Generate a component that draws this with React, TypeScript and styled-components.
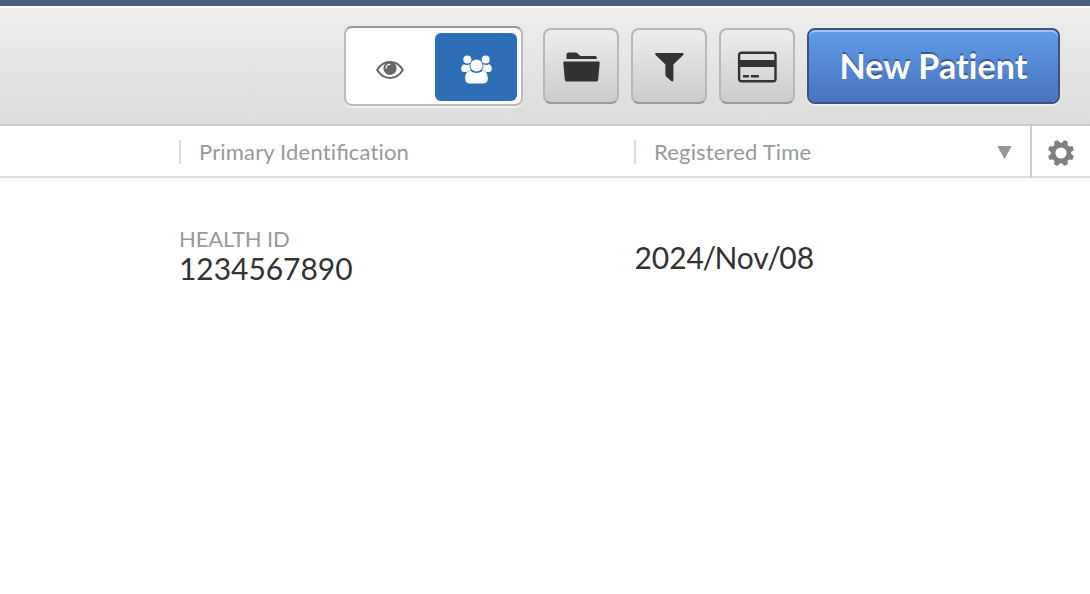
import React from "react";
import styled, { createGlobalStyle, css } from "styled-components";

const GlobalStyle = createGlobalStyle`
  * { box-sizing: border-box; }
  html, body { margin: 0; padding: 0; background: #fff; }
  body { font-family: Lato, "Open Sans", sans-serif; color: #333; overflow: hidden; font-variant-ligatures: none; }
  button { font: inherit; margin: 0; padding: 0; }
  svg { display: block; flex: none; }
`;

const Page = styled.div`
  width: 100%;
  height: 594px;
  background: #fff;
`;

const Toolbar = styled.header`
  display: flex;
  align-items: flex-start;
  justify-content: flex-end;
  height: 126px;
  padding: 20px 30px 0 0;
  border-top: 6px solid #4a6080;
  border-bottom: 2px solid #ccc;
  background: linear-gradient(to bottom, #fff 2px, #ededed 2px, #dcdcdc 100%);
`;

const Toggle = styled.div`
  display: flex;
  width: 179px;
  height: 80px;
  padding: 5px 4px 3px 5px;
  margin-right: 20px;
  border: 2px solid #bbb;
  border-top-color: #999;
  border-radius: 8px;
  background: #fff;
  box-shadow: 0 2px 0 rgba(255, 255, 255, 0.5);
`;

const Segment = styled.button<{ $active?: boolean }>`
  display: flex;
  align-items: center;
  justify-content: center;
  width: ${(p) => (p.$active ? 82 : 84)}px;
  height: 68px;
  padding-top: ${(p) => (p.$active ? 4 : 6)}px;
  padding-right: ${(p) => (p.$active ? 0 : 6)}px;
  border: 0;
  border-radius: 6px;
  color: ${(p) => (p.$active ? "#fff" : "#666")};
  background: ${(p) => (p.$active ? "#2e6eb6" : "transparent")};
`;

const Actions = styled.div`
  display: flex;
  gap: 12px;
  padding-top: 2px;
`;

const raised = css`
  display: flex;
  align-items: center;
  justify-content: center;
  height: 76px;
  border-radius: 8px;
`;

const IconButton = styled.button`
  ${raised}
  && { padding: 2px 0 0; }
  width: 76px;
  border: 2px solid #b8b8b8;
  border-bottom-color: #999;
  color: #333;
  background: linear-gradient(to bottom, #ededed, #cbcbcb) padding-box;
`;

const PrimaryButton = styled.button`
  ${raised}
  width: 253px;
  border: 2px solid #405180;
  color: #fff;
  font-size: 34px;
  font-weight: 700;
  letter-spacing: 0.1px;
  background: linear-gradient(to bottom, #609ce8, #4a73be) padding-box;
  box-shadow: inset 0 2px 0 rgba(255, 255, 255, 0.4), 0 2px 0 rgba(255, 255, 255, 0.5);
  text-shadow: 0 -2px 0 rgba(0, 0, 0, 0.35);
  white-space: nowrap;
`;

const ButtonLabel = styled.span`
  line-height: 42px;
`;

const HeaderRow = styled.div`
  display: grid;
  grid-template-columns: 179px 455px 396px 60px;
  height: 52px;
  border-bottom: 2px solid #ddd;
`;

const HeaderCell = styled.div`
  display: flex;
  align-items: center;
  justify-content: space-between;
  height: 24px;
  margin-top: 14px;
  padding: 0 18.5px 0 18px;
  border-left: 2px solid #ddd;
  color: #999;
  font-size: 22px;
  line-height: 24px;
  white-space: nowrap;
`;

const ColumnTitle = styled.span`
  letter-spacing: 0.17px;
`;

const Ligature = styled.span`
  letter-spacing: 0;
  font-variant-ligatures: common-ligatures;
`;

const SettingsCell = styled.button`
  display: flex;
  align-items: center;
  justify-content: center;
  height: 52px;
  border: 0;
  border-left: 2px solid #ccc;
  color: #808080;
  background: transparent;
  && { padding-top: 1px; }
`;

const PatientRow = styled.div`
  display: grid;
  grid-template-columns: 179px 455px 396px 60px;
  align-items: start;
  padding-top: 48px;
`;

const Identification = styled.div`
  grid-column: 2;
`;

const Caption = styled.div`
  color: #999;
  font-size: 22px;
  line-height: 26px;
  letter-spacing: -0.15px;
`;

const Value = styled.div`
  color: #333;
  font-size: 30px;
  line-height: 32px;
  letter-spacing: -0.05px;
`;

const DateValue = styled(Value)`
  margin-top: 15px;
  padding-left: 0.5px;
`;

const Slash = styled.span`
  margin: 0 -1.5px;
`;

const EyeIcon = () => (
  <svg width="28" height="18" viewBox="0 0 28 18">
    <path d="M1.2 9C4.2 4 8.9 1.1 14 1.1S23.8 4 26.8 9C23.8 14 19.1 16.9 14 16.9S4.2 14 1.2 9Z" fill="none" stroke="currentColor" strokeWidth="2" />
    <circle cx="14" cy="7.4" r="6.6" fill="currentColor" />
    <path d="M10.1 7.2A4 4 0 0 1 14 3.3" fill="none" stroke="#fff" strokeWidth="1.2" strokeLinecap="round" />
  </svg>
);

const PeopleIcon = () => (
  <svg width="31" height="29" viewBox="0 0 31 29" fill="currentColor">
    <circle cx="6.3" cy="4.5" r="4" />
    <circle cx="24.7" cy="4.5" r="4" />
    <path d="M3.2 9.2C5 10.3 7 10.3 8.7 9.3A7.4 7.4 0 0 0 10.1 15.3C8.2 15.4 7 16.2 6 17H3.2C1.2 17 .3 16.1.3 14.3C.3 12 .9 9.3 3.2 9.2Z" />
    <path d="M27.8 9.2C26 10.3 24 10.3 22.3 9.3A7.4 7.4 0 0 1 20.9 15.3C22.8 15.4 24 16.2 25 17H27.8C29.8 17 30.7 16.1 30.7 14.3C30.7 12 30.1 9.3 27.8 9.2Z" />
    <circle cx="15.5" cy="10.5" r="6.1" />
    <path d="M9.3 15.7C13 18.7 18 18.7 21.7 15.7C25.6 15.7 26.8 20 26.8 23.8C26.8 26.8 25.1 28.4 22.4 28.4H8.6C5.9 28.4 4.2 26.8 4.2 23.8C4.2 20 5.4 15.7 9.3 15.7Z" />
  </svg>
);

const FolderIcon = () => (
  <svg width="38" height="30" viewBox="-.5 0 38 30" fill="currentColor">
    <path d="M4 7V2.8C4 1.4 5 .6 6.2.6H13.2C15.6.6 16.1 4 18.6 4H32.7C33.7 4 34.3 4.8 34.3 5.7V7Z" />
    <path d="M2 9.4H36C36.8 9.4 37.3 10 37.2 10.8L35.7 27.5C35.6 28.8 34.8 29.6 33.5 29.6H4.5C3.2 29.6 2.4 28.8 2.3 27.5L.8 10.8C.7 10 1.2 9.4 2 9.4Z" />
  </svg>
);

const FilterIcon = () => (
  <svg width="30" height="30" viewBox="-.4 0 30 30" fill="currentColor">
    <path d="M1.8 1H28.2C29.4 1 29.6 2.1 28.8 2.9L19 12.5V28C19 29.4 17.8 29.8 16.8 29L11.9 24.7C11.3 24.2 11 23.6 11 22.8V12.5L1.2 2.9C.4 2.1.6 1 1.8 1Z" />
  </svg>
);

const CardIcon = () => (
  <svg width="40" height="32" viewBox="-.4 0 40 32">
    <rect x="1.7" y="1.8" width="36.4" height="28.4" rx="2.2" fill="none" stroke="currentColor" strokeWidth="2.4" />
    <path d="M2 9H38V16H2ZM5.6 24H11.5V26.5H5.6ZM13.4 24H21.5V26.5H13.4Z" fill="currentColor" />
  </svg>
);

const SortIcon = () => (
  <svg width="15" height="13" viewBox="0 0 15 13">
    <path d="M.3 0H14.7L7.5 13Z" fill="#999" />
  </svg>
);

const GearIcon = () => (
  <svg width="26" height="26" viewBox="-13 -13 26 26" fill="none">
    <circle r="7.9" stroke="currentColor" strokeWidth="4.6" />
    {[22.5, 67.5, 112.5, 157.5, 202.5, 247.5, 292.5, 337.5].map((angle) => (
      <path key={angle} transform={`rotate(${angle})`} d="M-3.9 -8.6Q-2.3 -10.8 -2.1 -13Q0 -13.4 2.1 -13Q2.3 -10.8 3.9 -8.6Z" fill="currentColor" />
    ))}
  </svg>
);

export default function App() {
  return (
    <Page>
      <GlobalStyle />
      <Toolbar>
        <Toggle>
          <Segment aria-label="Viewed patients"><EyeIcon /></Segment>
          <Segment $active aria-label="All patients"><PeopleIcon /></Segment>
        </Toggle>
        <Actions>
          <IconButton aria-label="Folder"><FolderIcon /></IconButton>
          <IconButton aria-label="Filter"><FilterIcon /></IconButton>
          <IconButton aria-label="Card"><CardIcon /></IconButton>
          <PrimaryButton><ButtonLabel>New Patient</ButtonLabel></PrimaryButton>
        </Actions>
      </Toolbar>
      <HeaderRow>
        <span />
        <HeaderCell><ColumnTitle>Primary Identi<Ligature>fi</Ligature>cation</ColumnTitle></HeaderCell>
        <HeaderCell><ColumnTitle>Registered Time</ColumnTitle><SortIcon /></HeaderCell>
        <SettingsCell aria-label="Settings"><GearIcon /></SettingsCell>
      </HeaderRow>
      <PatientRow>
        <Identification>
          <Caption>HEALTH ID</Caption>
          <Value>1234567890</Value>
        </Identification>
        <DateValue>2024<Slash>/</Slash>Nov<Slash>/</Slash>08</DateValue>
      </PatientRow>
    </Page>
  );
}
